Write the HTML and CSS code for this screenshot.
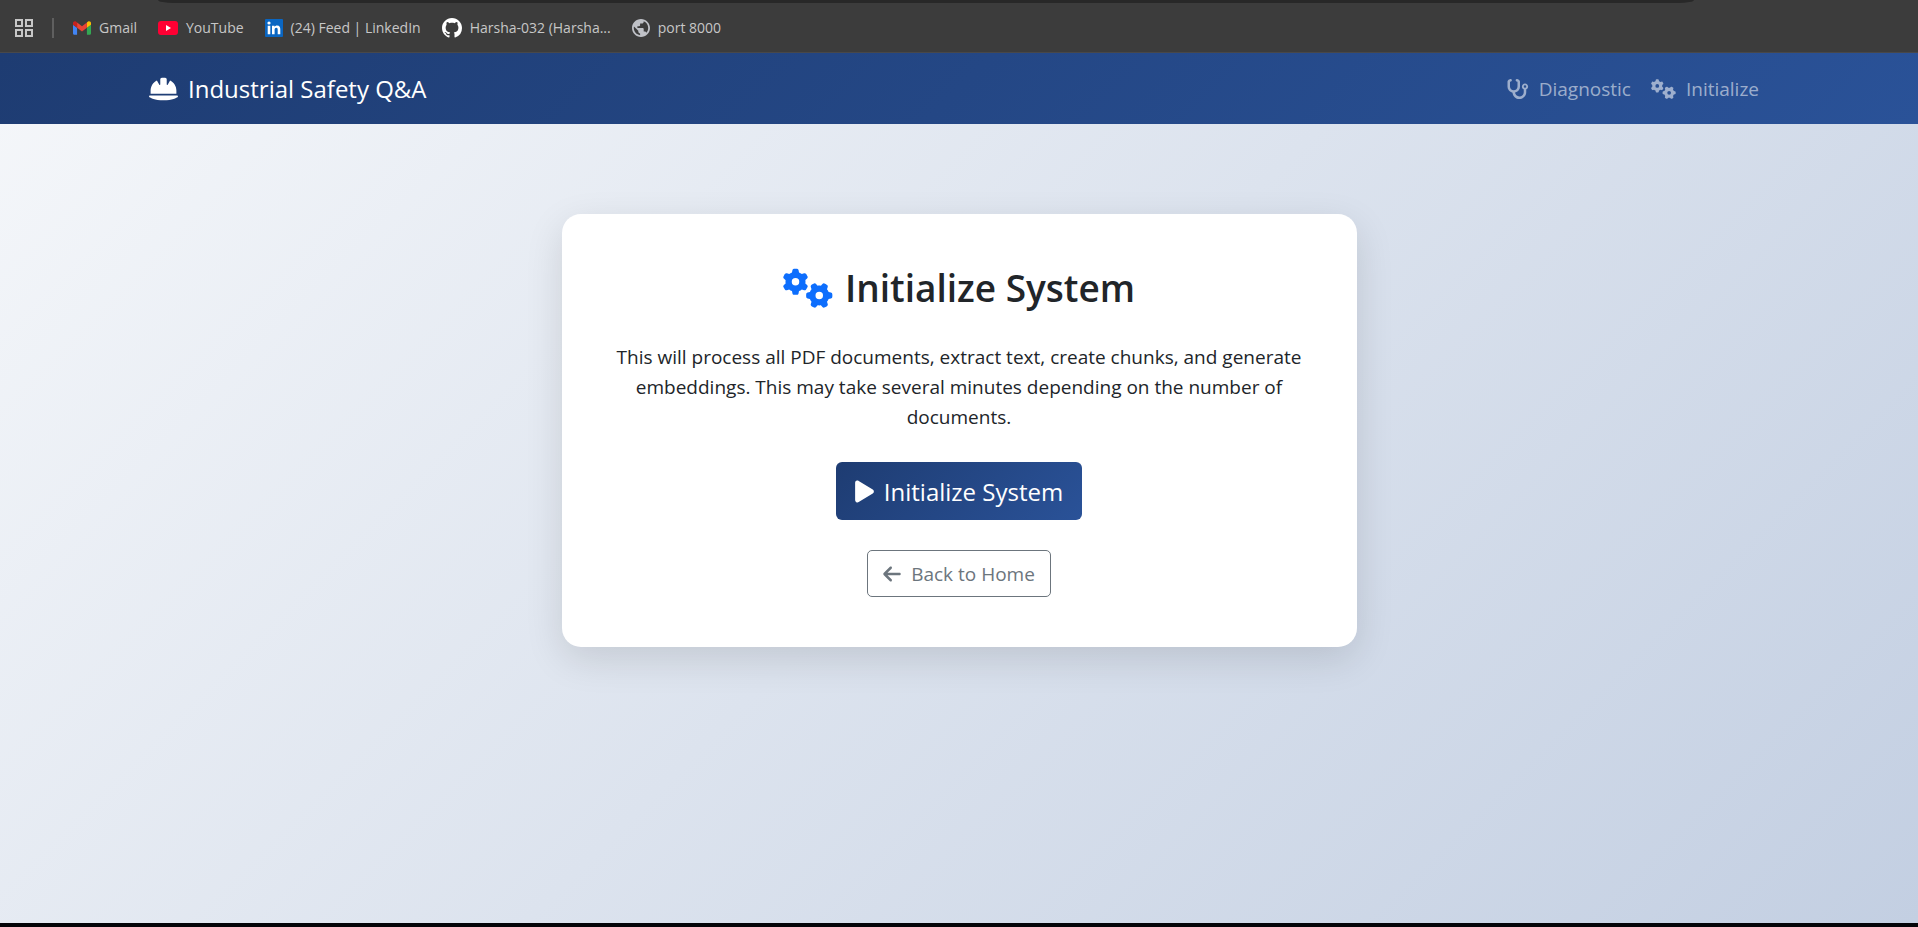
FILE: index.html
```html
<!DOCTYPE html>
<html lang="en">
<head>
<meta charset="utf-8">
<title>Initialize System</title>
<link rel="stylesheet" href="styles.css">
</head>
<body>
<svg class="defs" aria-hidden="true">
  <symbol id="gears" viewBox="0 0 640 512"><path d="M308.5 135.3c7.1-6.3 9.9-16.2 6.2-25c-2.3-5.3-4.8-10.5-7.6-15.5L304 89.4c-3-5-6.3-9.9-9.8-14.6c-5.7-7.6-15.7-10.1-24.7-7.1l-28.2 9.3c-10.7-8.8-23-16-36.2-20.9L199 27.1c-1.9-9.3-9.1-16.7-18.5-17.8C173.9 8.4 167.2 8 160.4 8h-.7c-6.8 0-13.5 .4-20.1 1.2c-9.4 1.1-16.6 8.6-18.5 17.8L115 56.1c-13.3 5-25.5 12.1-36.2 20.9L50.5 67.8c-9-3-19-.5-24.7 7.1c-3.5 4.7-6.8 9.6-9.9 14.6l-3 5.3c-2.8 5-5.3 10.2-7.6 15.6c-3.7 8.7-.9 18.6 6.2 25l22.2 19.8C32.6 161.9 32 168.9 32 176s.6 14.1 1.7 20.9L11.5 216.7c-7.1 6.3-9.9 16.2-6.2 25c2.3 5.3 4.8 10.5 7.6 15.6l3 5.2c3 5.1 6.3 9.9 9.9 14.6c5.7 7.6 15.7 10.1 24.7 7.1l28.2-9.3c10.7 8.8 23 16 36.2 20.9l6.1 29.1c1.9 9.3 9.1 16.7 18.5 17.8c6.7 .8 13.5 1.2 20.4 1.2s13.7-.4 20.4-1.2c9.4-1.1 16.6-8.6 18.5-17.8l6.1-29.1c13.3-5 25.5-12.1 36.2-20.9l28.2 9.3c9 3 19 .5 24.7-7.1c3.5-4.7 6.8-9.5 9.8-14.6l3.1-5.4c2.8-5 5.3-10.2 7.6-15.5c3.7-8.7 .9-18.6-6.2-25l-22.2-19.8c1.1-6.8 1.7-13.8 1.7-20.9s-.6-14.1-1.7-20.9l22.2-19.8zM112 176a48 48 0 1 1 96 0 48 48 0 1 1 -96 0zM504.7 500.5c6.3 7.1 16.2 9.9 25 6.2c5.3-2.3 10.5-4.8 15.5-7.6l5.4-3.1c5-3 9.9-6.3 14.6-9.8c7.6-5.7 10.1-15.7 7.1-24.7l-9.3-28.2c8.8-10.7 16-23 20.9-36.2l29.1-6.1c9.3-1.9 16.7-9.1 17.8-18.5c.8-6.7 1.2-13.5 1.2-20.4s-.4-13.7-1.2-20.4c-1.1-9.4-8.6-16.6-17.8-18.5L583.9 307c-5-13.3-12.1-25.5-20.9-36.2l9.3-28.2c3-9 .5-19-7.1-24.7c-4.7-3.5-9.6-6.8-14.6-9.9l-5.3-3c-5-2.8-10.2-5.3-15.6-7.6c-8.7-3.7-18.6-.9-25 6.2l-19.8 22.2c-6.8-1.1-13.8-1.7-20.9-1.7s-14.1 .6-20.9 1.7l-19.8-22.2c-6.3-7.1-16.2-9.9-25-6.2c-5.3 2.3-10.5 4.8-15.6 7.6l-5.2 3c-5.1 3-9.9 6.3-14.6 9.9c-7.6 5.7-10.1 15.7-7.1 24.7l9.3 28.2c-8.8 10.7-16 23-20.9 36.2L315.1 313c-9.3 1.9-16.7 9.1-17.8 18.5c-.8 6.7-1.2 13.5-1.2 20.4s.4 13.7 1.2 20.4c1.1 9.4 8.6 16.6 17.8 18.5l29.1 6.1c5 13.3 12.1 25.5 20.9 36.2l-9.3 28.2c-3 9-.5 19 7.1 24.7c4.7 3.5 9.5 6.8 14.6 9.8l5.4 3.1c5 2.8 10.2 5.3 15.5 7.6c8.7 3.7 18.6 .9 25-6.2l19.8-22.2c6.8 1.1 13.8 1.7 20.9 1.7s14.1-.6 20.9-1.7l19.8 22.2zM464 304a48 48 0 1 1 0 96 48 48 0 1 1 0-96z"/></symbol>
</svg>

<nav class="bookmarks" aria-label="Bookmarks">
  <div class="address-edge"></div>
  <div class="bookmark-row">
    <button class="apps" aria-label="Apps">
      <svg width="18" height="18" viewBox="0 0 18 18" fill="none" stroke="#c7c7c7" stroke-width="2"><path d="M1 1h6v6H1zM11 1h6v6h-6zM1 11h6v6H1zM11 11h6v6h-6z"/></svg>
    </button>
    <span class="divider"></span>
    <a class="bookmark" href="#">
      <svg width="18" height="14" viewBox="52 42 88 66"><path fill="#4285f4" d="M58 108h14V74L52 59v43c0 3.320 2.690 6 6 6"/><path fill="#34a853" d="M120 108h14c3.320 0 6-2.690 6-6V59l-20 15"/><path fill="#fbbc04" d="M120 48v26l20-15v-8c0-7.420-8.470-11.650-14.400-7.200"/><path fill="#ea4335" d="M72 74V48l24 18 24-18v26L96 92"/><path fill="#c5221f" d="M52 51v8l20 15V48l-5.600-4.200c-5.940-4.450-14.400-.22-14.400 7.200"/></svg>
      <span>Gmail</span>
    </a>
    <a class="bookmark" href="#">
      <svg width="20" height="14" viewBox="0 0 20 14"><rect width="20" height="14" rx="3" fill="#ff0033"/><path d="M8 4l5 3-5 3z" fill="#fff"/></svg>
      <span>YouTube</span>
    </a>
    <a class="bookmark" href="#">
      <svg width="18" height="18" viewBox="0 0 18 18"><rect width="18" height="18" rx="1" fill="#0a66c2"/><g fill="#fff"><circle cx="4" cy="4" r="1.600"/><path d="M2.700 6.800h2.600v8.500H2.700zM7 6.800h2.500V8c.5-.8 1.400-1.400 2.600-1.400 2.600 0 3.200 1.700 3.200 4v4.700h-2.600v-4.200c0-1 0-2.300-1.400-2.300s-1.700 1.100-1.700 2.200v4.300H7z"/></g></svg>
      <span>(24) Feed | LinkedIn</span>
    </a>
    <a class="bookmark" href="#">
      <svg width="20" height="20" viewBox="0 0 16 16" fill="#fff"><path d="M8 0C3.580 0 0 3.580 0 8c0 3.540 2.290 6.530 5.470 7.590.4.070.55-.17.55-.38 0-.19-.01-.82-.01-1.490-2.010.37-2.530-.49-2.690-.94-.09-.23-.48-.94-.82-1.130-.28-.15-.68-.52-.01-.53.63-.01 1.080.58 1.230.82.72 1.210 1.870.87 2.330.66.07-.52.28-.87.51-1.070-1.780-.2-3.640-.89-3.640-3.950 0-.87.31-1.590.82-2.150-.08-.2-.36-1.020.08-2.120 0 0 .67-.21 2.200.82.64-.18 1.320-.27 2-.27s1.360.09 2 .27c1.530-1.040 2.200-.82 2.200-.82.44 1.100.16 1.920.08 2.120.51.56.82 1.270.82 2.150 0 3.070-1.870 3.750-3.650 3.950.29.25.54.73.54 1.480 0 1.070-.01 1.930-.01 2.200 0 .21.15.46.55.38A8.010 8.010 0 0 0 16 8c0-4.420-3.580-8-8-8z"/></svg>
      <span>Harsha-032 (Harsha...</span>
    </a>
    <a class="bookmark" href="#">
      <svg width="18" height="18" viewBox="2 2 20 20" fill="#bfc1c7"><path d="M12 2C6.480 2 2 6.480 2 12s4.480 10 10 10 10-4.480 10-10S17.520 2 12 2zm-1 17.930c-3.950-.49-7-3.850-7-7.930 0-.62.080-1.210.21-1.790L9 15v1c0 1.100.9 2 2 2v1.930zm6.900-2.540c-.26-.81-1-1.390-1.900-1.390h-1v-3c0-.55-.45-1-1-1H8v-2h2c.55 0 1-.45 1-1V7h2c1.100 0 2-.9 2-2v-.41c2.930 1.190 5 4.060 5 7.410 0 2.080-.8 3.970-2.100 5.390z"/></svg>
      <span>port 8000</span>
    </a>
  </div>
</nav>

<div class="app">
  <header class="navbar">
    <div class="container">
      <a class="brand" href="#">
        <svg width="29" height="26" viewBox="0 0 576 512" fill="currentColor"><path d="M256 32c-17.700 0-32 14.300-32 32v2.300 99.600c0 5.600-4.500 10.100-10.100 10.100c-3.600 0-7-1.900-8.800-5.100L157.100 87C83 123.500 32 199.800 32 288v64H544l0-66.400c-.9-87.200-51.700-162.400-125.100-198.600l-48 83.900c-1.800 3.200-5.200 5.100-8.800 5.100c-5.600 0-10.100-4.500-10.100-10.100V66.300 64c0-17.700-14.300-32-32-32H256zM16.600 384C7.400 384 0 391.400 0 400.600c0 4.700 2 9.200 5.800 11.900C27.500 428.400 111.800 480 288 480s260.500-51.600 282.200-67.500c3.800-2.800 5.800-7.200 5.800-11.900c0-9.200-7.400-16.600-16.600-16.600H16.600z"/></svg>
        <span>Industrial Safety Q&amp;A</span>
      </a>
      <nav class="nav-links" aria-label="Main">
        <a class="nav-link" href="#">
          <svg width="23" height="20" viewBox="0 0 576 512" fill="currentColor"><path d="M142.400 21.900c5.600 16.800-3.500 34.900-20.200 40.500L96 71.100V192c0 53 43 96 96 96s96-43 96-96V71.100l-26.100-8.700c-16.800-5.600-25.800-23.700-20.200-40.500s23.700-25.800 40.500-20.200l26.100 8.700C334.400 19.100 352 43.500 352 71.100V192c0 77.200-54.600 141.600-127.300 156.700C231 404.600 278.400 448 336 448c61.900 0 112-50.100 112-112V265.300c-28.300-12.300-48-40.500-48-73.300c0-44.200 35.800-80 80-80s80 35.800 80 80c0 32.800-19.700 61-48 73.300V336c0 97.200-78.800 176-176 176c-92.900 0-168.900-71.900-175.500-163.100C87.200 334.200 32 269.600 32 192V71.100c0-27.500 17.600-52 43.800-60.700l26.100-8.700c16.800-5.600 34.900 3.500 40.500 20.200zM480 224a32 32 0 1 0 0-64 32 32 0 1 0 0 64z"/></svg>
          <span>Diagnostic</span>
        </a>
        <a class="nav-link" href="#">
          <svg width="25" height="20" fill="currentColor"><use href="#gears"/></svg>
          <span>Initialize</span>
        </a>
      </nav>
    </div>
  </header>

  <main class="page">
    <section class="card">
      <h1 class="title">
        <svg class="title-icon" width="50" height="40"><use href="#gears"/></svg>
        <span>Initialize System</span>
      </h1>
      <p class="lead">This will process all PDF documents, extract text, create chunks, and generate embeddings. This may take several minutes depending on the number of documents.</p>
      <button class="btn btn-primary" type="button">
        <svg width="19" height="25" viewBox="0 0 384 512" fill="currentColor"><path d="M73 39c-14.800-9.100-33.400-9.400-48.500-.9S0 62.600 0 80V432c0 17.400 9.400 33.400 24.500 41.900s33.700 8.100 48.500-.9L361 297c14.300-8.700 23-24.200 23-41s-8.700-32.200-23-41L73 39z"/></svg>
        <span>Initialize System</span>
      </button>
      <a class="btn btn-outline" href="#">
        <svg width="18" height="20" viewBox="0 0 448 512" fill="currentColor"><path d="M9.400 233.400c-12.500 12.500-12.500 32.800 0 45.300l160 160c12.500 12.500 32.800 12.500 45.300 0s12.500-32.800 0-45.300L109.200 288 416 288c17.700 0 32-14.300 32-32s-14.300-32-32-32l-306.700 0L214.600 118.600c12.500-12.500 12.500-32.800 0-45.300s-32.800-12.500-45.300 0l-160 160z"/></svg>
        <span>Back to Home</span>
      </a>
    </section>
  </main>
</div>
<footer class="taskbar-edge"></footer>
</body>
</html>
```
FILE: styles.css
```css
* { box-sizing: border-box; }

body {
  margin: 0;
  min-height: 100vh;
  display: flex;
  flex-direction: column;
  font-family: "Segoe UI", "Open Sans", "Noto Sans", sans-serif;
  font-size: 19px;
  line-height: 30px;
  color: #212529;
  background: #3c3c3c;
}

a { color: inherit; text-decoration: none; }
svg { display: block; flex: none; }
.defs { position: absolute; width: 0; height: 0; }

/* Bookmarks bar */
.bookmarks {
  height: 53px;
  background: #3c3c3c;
  border-bottom: 1px solid #48484a;
  color: #c7c7c7;
  font-size: 14px;
  line-height: 20px;
}
.address-edge {
  height: 3px;
  margin: 0 224px 0 158px;
  background: #282828;
  border-radius: 0 0 16px 16px / 0 0 3px 3px;
}
.bookmark-row {
  display: flex;
  align-items: center;
  height: 50px;
  padding-left: 15px;
}
.apps { padding: 0; border: 0; background: none; }
.divider {
  width: 2px;
  height: 20px;
  margin: 0 19px;
  background: #5f5f5f;
}
.bookmark {
  display: flex;
  align-items: center;
  gap: 8px;
  margin-right: 21px;
}

/* Header */
.navbar {
  color: #fff;
  background: linear-gradient(135deg, #1e3c72 0%, #2a5298 100%);
}
.container {
  display: flex;
  align-items: center;
  justify-content: space-between;
  max-width: 1650px;
  min-height: 71px;
  margin: 0 auto;
  padding: 0 15px;
}
.brand {
  display: flex;
  align-items: center;
  gap: 10px;
  font-size: 24px;
}
.nav-links { display: flex; }
.nav-link {
  display: flex;
  align-items: center;
  gap: 10px;
  padding: 10px;
  color: rgba(255, 255, 255, 0.55);
}

/* Page */
.app {
  flex: 1;
  background: linear-gradient(135deg, #f5f7fa 0%, #c3cfe2 100%);
}
.page { padding: 90px 15px; }
.card {
  display: flex;
  flex-direction: column;
  align-items: center;
  gap: 30px;
  max-width: 795px;
  margin: 0 auto;
  padding: 50px;
  background: #fff;
  border-radius: 19px;
  box-shadow: 0 12px 38px rgba(0, 0, 0, 0.12);
}
.title {
  display: flex;
  align-items: center;
  gap: 12px;
  margin: 0;
  font-size: 37px;
  font-weight: 600;
  line-height: 48px;
}
.title-icon { fill: #0d6efd; }
.lead {
  margin: 0;
  text-align: center;
}
.btn {
  display: flex;
  align-items: center;
  gap: 10px;
  font-family: inherit;
  cursor: pointer;
}
.btn-primary {
  height: 58px;
  padding: 0 19px;
  border: 0;
  border-radius: 6px;
  color: #fff;
  font-size: 24px;
  background: linear-gradient(135deg, #1e3c72 0%, #2a5298 100%);
}
.btn-outline {
  height: 47px;
  padding: 0 15px;
  border: 1px solid #6c757d;
  border-radius: 5px;
  color: #6c757d;
}
.taskbar-edge {
  height: 4px;
  background: #040408;
}
```
